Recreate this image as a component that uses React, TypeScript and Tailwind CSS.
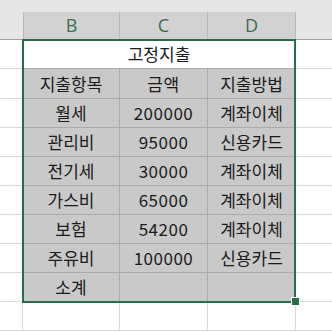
import React from 'react';

const rows: [string, string, string][] = [
  ['월세', '200000', '계좌이체'],
  ['관리비', '95000', '신용카드'],
  ['전기세', '30000', '계좌이체'],
  ['가스비', '65000', '계좌이체'],
  ['보험', '54200', '계좌이체'],
  ['주유비', '100000', '신용카드'],
  ['소계', '', ''],
];

const font = { fontFamily: '"Noto Sans CJK KR", "Noto Sans", sans-serif' };

function GrayRow({ cells, tall }: { cells: [string, string, string]; tall?: boolean }) {
  return (
    <div className={`flex ${tall ? 'h-[30px]' : 'h-[29px]'}`}>
      <div className="w-[23px] shrink-0 border-r border-b border-[#d9d9d9] bg-white" />
      <div className="w-[97px] shrink-0 border-r border-b border-[#ababab] bg-[#c9c9c9] flex items-center justify-center">
        {cells[0]}
      </div>
      <div className="w-[88px] shrink-0 border-r border-b border-[#ababab] bg-[#c9c9c9] flex items-center justify-center tracking-[0.5px]">
        {cells[1]}
      </div>
      <div className="w-[88px] shrink-0 border-r border-b border-[#ababab] bg-[#c9c9c9] flex items-center justify-center">
        {cells[2]}
      </div>
      <div className="flex-1 border-b border-[#d9d9d9] bg-white" />
    </div>
  );
}

export default function App() {
  return (
    <div className="relative w-[332px] h-[332px] overflow-hidden bg-white text-[17px] text-[#1b1b1b]" style={font}>
      {/* column headers */}
      <div className="flex h-[40px] bg-[#e6e6e6] border-b border-[#a0a0a0]">
        <div className="w-[23px] shrink-0" />
        <div className="flex pt-[12px]">
          <div className="w-[97px] border-r border-l border-[#b8b8b8] bg-[#d2d2d2] flex items-center justify-center text-[18px] text-[#3d6b4f]" style={{ fontFamily: '"Open Sans", sans-serif' }}>
            B
          </div>
          <div className="w-[88px] border-r border-[#b8b8b8] bg-[#d2d2d2] flex items-center justify-center text-[18px] text-[#3d6b4f]" style={{ fontFamily: '"Open Sans", sans-serif' }}>
            C
          </div>
          <div className="w-[88px] border-r border-[#b8b8b8] bg-[#d2d2d2] flex items-center justify-center text-[18px] text-[#3d6b4f]" style={{ fontFamily: '"Open Sans", sans-serif' }}>
            D
          </div>
        </div>
        <div className="flex-1" />
      </div>

      {/* title row */}
      <div className="flex h-[29px]">
        <div className="w-[23px] shrink-0 border-r border-b border-[#d9d9d9]" />
        <div className="w-[273px] shrink-0 border-r border-b border-[#ababab] flex items-center justify-center">
          고정지출
        </div>
        <div className="flex-1 border-b border-[#d9d9d9]" />
      </div>

      <GrayRow cells={['지출항목', '금액', '지출방법']} tall />
      {rows.map((r) => (
        <GrayRow key={r[0]} cells={r} />
      ))}

      {/* empty row below */}
      <div className="flex h-[29px]">
        <div className="w-[23px] shrink-0 border-r border-b border-[#d9d9d9]" />
        <div className="w-[97px] shrink-0 border-r border-b border-[#d9d9d9]" />
        <div className="w-[88px] shrink-0 border-r border-b border-[#d9d9d9]" />
        <div className="w-[88px] shrink-0 border-r border-b border-[#d9d9d9]" />
        <div className="flex-1 border-b border-[#d9d9d9]" />
      </div>

      {/* selection outline */}
      <div className="absolute left-[22px] top-[39px] w-[274px] h-[264px] border-2 border-[#2a6b48] pointer-events-none" />
      <div className="absolute left-[292px] top-[298px] w-[7px] h-[7px] bg-[#2a6b48] outline outline-1 outline-white" />
    </div>
  );
}
